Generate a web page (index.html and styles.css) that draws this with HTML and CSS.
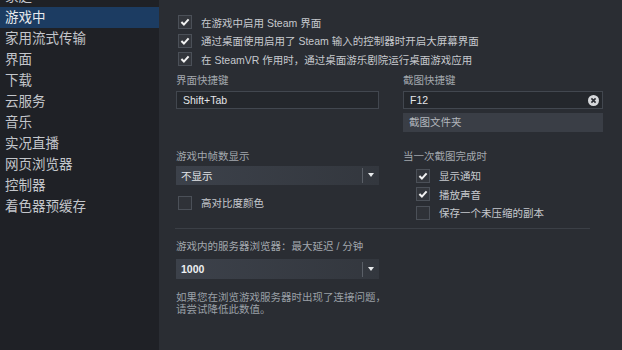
FILE: index.html
```html
<!DOCTYPE html>
<html lang="zh-CN">
<head>
    <meta charset="UTF-8">
    <title>设置 - 游戏中</title>
    <link rel="stylesheet" href="styles.css">
</head>
<body>
    <div class="window">
        <nav class="sidebar">
            <ul class="menu">
                <li>家庭</li>
                <li class="active">游戏中</li>
                <li>家用流式传输</li>
                <li>界面</li>
                <li>下载</li>
                <li>云服务</li>
                <li>音乐</li>
                <li>实况直播</li>
                <li>网页浏览器</li>
                <li>控制器</li>
                <li>着色器预缓存</li>
            </ul>
        </nav>

        <main class="content">
            <div class="checks top-checks">
                <label class="check"><span class="box on"><svg viewBox="0 0 13 13"><path d="M2.6 6.6 L5.3 9.3 L10.4 3.6"/></svg></span>在游戏中启用 Steam 界面</label>
                <label class="check"><span class="box on"><svg viewBox="0 0 13 13"><path d="M2.6 6.6 L5.3 9.3 L10.4 3.6"/></svg></span>通过桌面使用启用了 Steam 输入的控制器时开启大屏幕界面</label>
                <label class="check"><span class="box on"><svg viewBox="0 0 13 13"><path d="M2.6 6.6 L5.3 9.3 L10.4 3.6"/></svg></span>在 SteamVR 作用时，通过桌面游乐剧院运行桌面游戏应用</label>
            </div>

            <div class="cols">
                <div class="col">
                    <p class="label">界面快捷键</p>
                    <div class="field">Shift+Tab</div>
                </div>
                <div class="col">
                    <p class="label">截图快捷键</p>
                    <div class="field">
                        F12
                        <span class="clear"><svg viewBox="0 0 11 11"><circle cx="5.5" cy="5.5" r="5.5"/><path d="M3.4 3.4 L7.6 7.6 M7.6 3.4 L3.4 7.6"/></svg></span>
                    </div>
                    <div class="button">截图文件夹</div>
                </div>
            </div>

            <div class="cols second">
                <div class="col">
                    <p class="label">游戏中帧数显示</p>
                    <div class="select">
                        <span>不显示</span>
                        <span class="arrow"></span>
                    </div>
                    <label class="check single"><span class="box"></span>高对比度颜色</label>
                </div>
                <div class="col">
                    <p class="label">当一次截图完成时</p>
                    <div class="checks indent">
                        <label class="check"><span class="box on"><svg viewBox="0 0 13 13"><path d="M2.6 6.6 L5.3 9.3 L10.4 3.6"/></svg></span>显示通知</label>
                        <label class="check"><span class="box on"><svg viewBox="0 0 13 13"><path d="M2.6 6.6 L5.3 9.3 L10.4 3.6"/></svg></span>播放声音</label>
                        <label class="check"><span class="box"></span>保存一个未压缩的副本</label>
                    </div>
                </div>
            </div>

            <hr class="divider">

            <div class="col narrow">
                <p class="label">游戏内的服务器浏览器：最大延迟 / 分钟</p>
                <div class="select spaced">
                    <span class="value">1000</span>
                    <span class="arrow"></span>
                </div>
                <p class="hint">如果您在浏览游戏服务器时出现了连接问题，<br>请尝试降低此数值。</p>
            </div>
        </main>
    </div>
</body>
</html>
```

FILE: styles.css
```css
:root {
    --sidebar: #1f2126;
    --main: #2a2d33;
    --selected: #1c3c62;
    --text: #c6c9ce;
    --muted: #a3a8ae;
    --field: #24272c;
    --border: #42474f;
}

body {
    margin: 0;
    background: var(--main);
    font-family: "Liberation Sans", "Noto Sans CJK SC", sans-serif;
    color: var(--text);
    overflow: hidden;
}

.window {
    display: flex;
    height: 350px;
}

.sidebar {
    width: 159px;
    flex-shrink: 0;
    background: var(--sidebar);
    overflow: hidden;
}

.menu {
    list-style: none;
    margin: -14px 0 0;
    padding: 0;
}

.menu li {
    height: 21px;
    line-height: 21px;
    padding-left: 5px;
    font-size: 13.5px;
    color: #c3c6cb;
}

.menu li.active {
    background: var(--selected);
    color: #e6e9ec;
}

.content {
    flex: 1;
    padding: 13px 19px 0 17px;
    font-size: 10.5px;
}

.checks {
    display: flex;
    flex-direction: column;
}

.check {
    display: flex;
    align-items: center;
    height: 18.5px;
    color: var(--text);
}

.box {
    width: 12px;
    height: 12px;
    margin: 0 9px 0 2px;
    border: 1px solid #4b5058;
    background: #2f3238;
    display: flex;
    align-items: center;
    justify-content: center;
    flex-shrink: 0;
}

.box.on {
    background: #33363c;
}

.box svg {
    width: 12px;
    height: 12px;
    fill: none;
    stroke: #f2f2f2;
    stroke-width: 2.2;
}

.cols {
    display: grid;
    grid-template-columns: 203px 200px;
    column-gap: 24px;
    margin-top: 4px;
}

.cols.second {
    margin-top: 17px;
}

.col.narrow {
    width: 203px;
}

.label {
    margin: 0 0 4px;
    height: 14px;
    line-height: 14px;
    color: var(--muted);
    white-space: nowrap;
}

.field {
    position: relative;
    height: 16px;
    line-height: 16px;
    padding: 0 6px;
    background: var(--field);
    border: 1px solid var(--border);
    color: #e3e5e8;
}

.clear {
    position: absolute;
    right: 3px;
    top: 3px;
    width: 11px;
    height: 11px;
}

.clear svg {
    display: block;
    width: 11px;
    height: 11px;
}

.clear circle {
    fill: #d6d8db;
}

.clear path {
    stroke: #2a2d33;
    stroke-width: 1.6;
}

.button {
    margin-top: 4px;
    height: 19px;
    line-height: 19px;
    padding: 0 6px;
    background: #3a3e46;
    color: #b3b7bd;
}

.select {
    display: flex;
    align-items: center;
    height: 19px;
    margin-top: -1px;
    padding-left: 5px;
    background: linear-gradient(to right, #3c414a, #33373e);
    color: #e2e4e7;
}

.select.spaced {
    margin-top: 6px;
    height: 20px;
}

.select span:first-child {
    flex: 1;
}

.select .value {
    font-weight: bold;
    color: #eef0f2;
}

.arrow {
    width: 16px;
    height: 15px;
    border-left: 1px solid #5a5f67;
    display: flex;
    align-items: center;
    justify-content: center;
}

.arrow::after {
    content: "";
    border-left: 3.5px solid transparent;
    border-right: 3.5px solid transparent;
    border-top: 4px solid #e8eaec;
}

.check.single {
    margin-top: 9px;
}

.checks.indent {
    margin-top: 0;
    padding-left: 11px;
}

.divider {
    border: none;
    border-top: 1px solid #3b3f46;
    margin: 6px 13px 10px -1px;
}

.hint {
    margin: 12px 0 0;
    line-height: 12px;
    color: #9aa0a7;
    white-space: nowrap;
}
```
